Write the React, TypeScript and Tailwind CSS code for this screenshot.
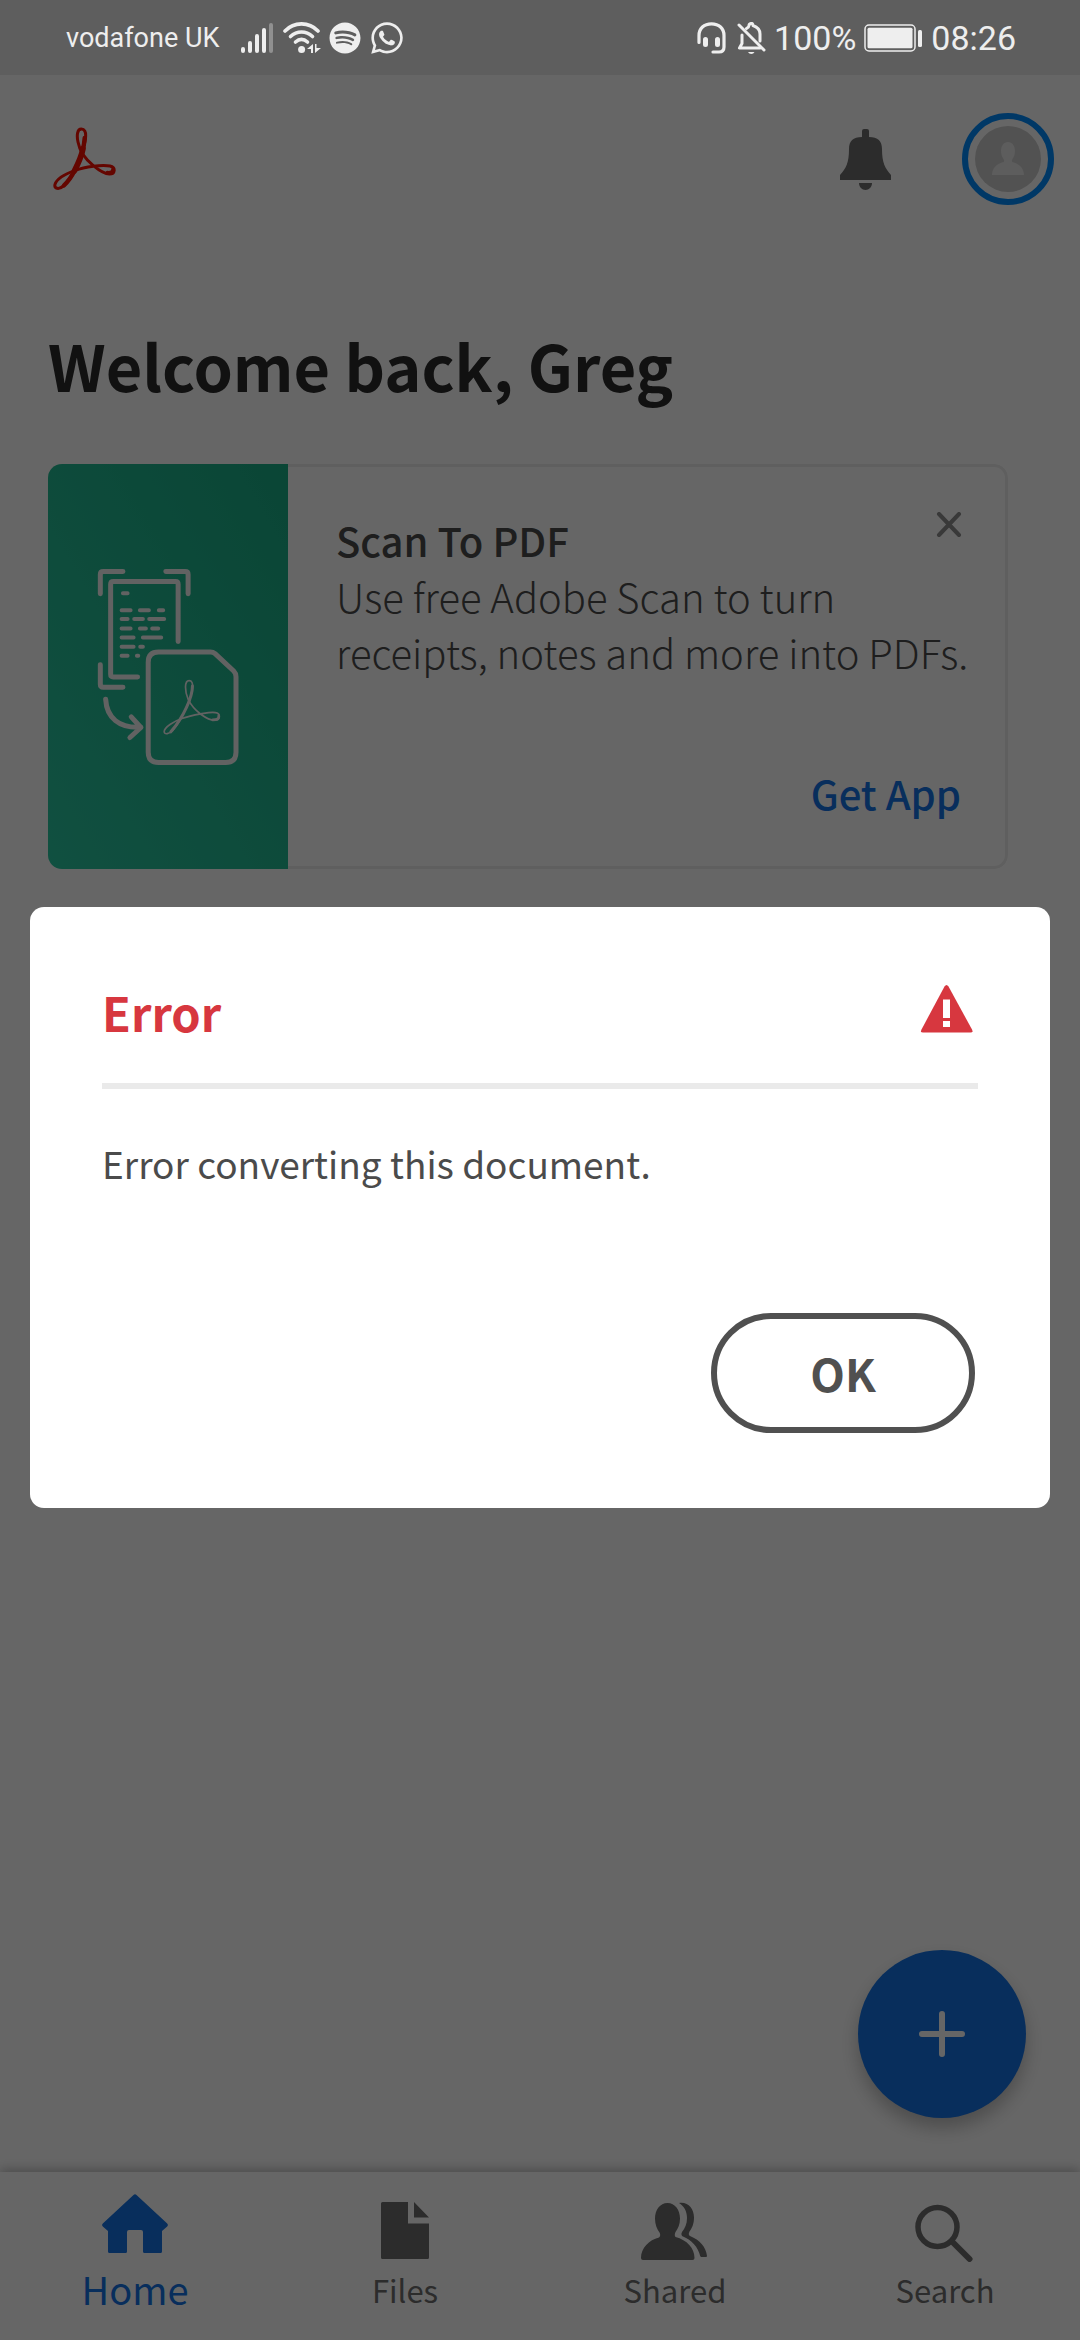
import type { ReactNode } from "react";
import { FaSpotify, FaWhatsapp } from "react-icons/fa";

function StatusBar() {
  return (
    <header className="flex h-[75px] shrink-0 items-center justify-between bg-[#5e5e5e] pr-16 pl-[66px] font-['Roboto',sans-serif] text-[#eeeeee]">
      <div className="flex items-center">
        <span className="mr-[22px] text-[27px] leading-8">vodafone UK</span>
        <svg className="mr-2 h-8 w-[34px]" viewBox="0 0 34 32" fill="none" stroke="currentColor" strokeWidth="4" strokeLinecap="round" aria-hidden="true">
          <path d="M2 27v2M9 21v8M16 14v15M23 8v21" />
          <path d="M30 3v26" opacity=".35" />
        </svg>
        <svg className="mr-2 h-8 w-[38px]" viewBox="0 0 38 32" fill="none" stroke="currentColor" strokeWidth="3.6" strokeLinecap="round" aria-hidden="true">
          <path d="M2 9c9-9.500 24-9.500 33 0" />
          <path d="M7.500 14.500c6.500-6 15.500-6 22 0" />
          <path d="M12.500 20c4-3.600 8-3.600 12 0" />
          <circle cx="18.600" cy="27.500" r="3.500" fill="currentColor" stroke="none" />
          <path d="M30 22v9h-2v-4h-4zM32 31v-9h1.500v4h4.500z" fill="currentColor" stroke="none" />
        </svg>
        <FaSpotify className="mr-2 size-8" aria-label="Spotify" />
        <FaWhatsapp className="size-9" aria-label="WhatsApp" />
      </div>
      <div className="flex items-center text-[34px] leading-10">
        <svg className="mr-[10px] h-8 w-[30px]" viewBox="0 0 30 32" fill="none" stroke="currentColor" strokeWidth="3.200" strokeLinecap="round" aria-hidden="true">
          <path d="M2 20.500V13.500C2 6.500 7 1.800 14.500 1.800S27 6.500 27 13.500V25q0 5-5 5h-6" />
          <path d="M8.500 17.500v5M20.500 17.500v5" strokeWidth="5" />
        </svg>
        <svg className="mr-2 h-8 w-[29px]" viewBox="0 0 29 32" fill="none" stroke="currentColor" strokeWidth="3" strokeLinecap="round" strokeLinejoin="round" aria-hidden="true">
          <path d="M2 3l25 25" />
          <path d="M5 13v8.500L2.500 26H23M9.500 6.500Q12 5 12 3.500t2-2 2 2Q23 6 23 12v7" />
          <path d="M11 30h6.500q-1 2-3.200 2T11 30z" fill="currentColor" stroke="none" />
        </svg>
        <span>100%</span>
        <svg className="mx-2 h-[30px] w-[59px]" viewBox="0 0 59 30" fill="none" aria-label="Battery full" role="img">
          <rect x="1" y="2" width="50" height="26" rx="4" stroke="currentColor" strokeWidth="1.500" />
          <rect x="3.500" y="4.700" width="45" height="20.600" rx="1.500" fill="currentColor" />
          <rect x="54" y="7" width="4" height="17" rx="1.500" fill="currentColor" />
        </svg>
        <span>08:26</span>
      </div>
    </header>
  );
}

function AcrobatMark() {
  return (
    <svg className="size-16 text-[#fa0f00]" viewBox="36 51 192 192" fill="none" stroke="currentColor" strokeLinecap="round" strokeLinejoin="round" role="img" aria-label="Adobe Acrobat">
      <path
        d="M124 57C111 57 110 78 114 96C118 118 132 144 160 167C178 182 194 192 208 192C226 192 228 172 210 168C196 165 178 166 160 169C140 172 124 175 106 181C80 190 50 206 45 223C42 236 56 240 70 228C86 214 98 194 106 178C116 158 124 136 129 118C137 92 144 57 124 57z"
        strokeWidth="9"
      />
      <path d="M129 116C125 136 114 162 103 183" strokeWidth="17" />
      <path d="M134 84C133 100 131 110 127 124M106 178C96 198 86 214 72 226" strokeWidth="13" />
      <path d="M202 188q16 2 17-10" strokeWidth="11" />
    </svg>
  );
}

function ScanArtwork() {
  return (
    <svg className="h-[198px] w-[143px] text-[#f4f6f5]" viewBox="200 354 430 594" fill="none" stroke="currentColor" strokeWidth="15" strokeLinecap="round" strokeLinejoin="round" aria-hidden="true">
      <path d="M210 431v-58q0-9 9-9h59M407 364h58q9 0 9 9v58M210 644v59q0 9 9 9h59" />
      <path d="M322 681h-73q-8 0-8-8V402q0-8 8-8h187q8 0 8 8v172" />
      <path d="M278 429h14M274 480h27M329 480h27M386 480h13M274 507h18M312 507h26M357 507h45M274 535h27M329 535h18M366 535h18M274 562h36M338 562h55M274 590h36M330 590h8M274 617h18M320 617h4" strokeWidth="12" />
      <path d="M226 748c3 55 40 88 106 84M303 801l29 32-33 30" />
      <path d="M354 637q0-31 31-31h156q8 0 14 5l56 52q7 7 7 17v227q0 31-31 31H385q-31 0-31-31z" />
      <path d="M477 692C462 692 464 725 474 748C484 768 498 782 512 793C530 806 545 812 556 811C572 809 572 790 556 788C540 786 525 790 512 792C490 796 475 799 455 806C430 815 403 832 402 845C402 856 418 852 428 842C445 822 465 785 477 752C488 725 494 692 477 692z" strokeWidth="5" />
      <path d="M487 708C487 740 462 800 422 846" strokeWidth="9" />
      <path d="M548 810q20 0 18-12" strokeWidth="8" />
    </svg>
  );
}

function ScanCard() {
  return (
    <section className="flex min-h-[405px] overflow-hidden rounded-[14px] bg-white">
      <div className="flex w-60 shrink-0 items-center justify-center bg-linear-to-bl from-[#1aae86] to-[#2ac8a2]">
        <ScanArtwork />
      </div>
      <div className="flex flex-1 flex-col rounded-r-[14px] border-y-3 border-r-3 border-[#ededed] py-[45px] pr-5 pl-12">
        <div className="flex items-start justify-between">
          <h2 className="text-[40px] leading-14 font-medium text-[#4b4b4b]">Scan To PDF</h2>
          <button type="button" aria-label="Dismiss" className="mr-5 size-8 text-[#8e8e8e]">
            <svg viewBox="0 0 32 32" fill="none" stroke="currentColor" strokeWidth="4" strokeLinecap="round">
              <path d="M6 2l20 21M26 2L6 23" />
            </svg>
          </button>
        </div>
        <p className="text-[40px] leading-14 font-light text-[#4b4b4b]">Use free Adobe Scan to turn receipts, notes and more into PDFs.</p>
        <a href="#get-app" className="mt-auto mr-6 self-end text-[40px] leading-14 font-medium text-[#1473e6]">
          Get App
        </a>
      </div>
    </section>
  );
}

function NavItem({ label, active = false, children }: { label: string; active?: boolean; children: ReactNode }) {
  return (
    <a
      href={`#${label.toLowerCase()}`}
      aria-current={active ? "page" : undefined}
      className={
        active
          ? "flex flex-col items-center gap-[3px] text-[38px] leading-12 text-[#1473e6]"
          : "flex flex-col items-center gap-1 text-[31px] leading-12 text-[#6e6e6e]"
      }
    >
      <svg className="size-18" viewBox="0 0 72 72" fill="currentColor" aria-hidden="true">
        {children}
      </svg>
      {label}
    </a>
  );
}

function BottomNav() {
  return (
    <nav className="grid grid-cols-4 bg-white pt-[18px] pb-[26px] shadow-[0_-3px_10px_rgba(0,0,0,0.25)]">
      <NavItem label="Home" active>
        <path d="M34.500 5q1.500-1.500 3 0L68.200 33.500q1.600 1.500 0 3L63 41v20.500q0 1.500-1.500 1.500h-16q-1.500 0-1.500-1.500V42q0-2-2-2H30q-2 0-2 2v19.500q0 1.500-1.500 1.500h-16Q9 63 9 61.500V41l-5.200-4.500q-1.600-1.500 0-3z" />
      </NavItem>
      <NavItem label="Files">
        <path d="M13.500 12H39v21.500h21V67.500q0 1.500-1.500 1.500h-45Q12 69 12 67.500v-54Q12 12 13.500 12zM45 12l15 15.500H45z" />
      </NavItem>
      <NavItem label="Shared">
        <path d="M28.500 13C36 13 41 20 41 28.500c0 6-2 10-4.500 13.500-1 2-1 4 0 5C48 50 55.500 58 55.500 68q0 2-2 2H4q-2 0-2-2C2 58 10 50 20 47.500c1.500-1 1.500-3.500.500-5C18 39 16 34.500 16 28.500 16 20 21 13 28.500 13z" />
        <path d="M40 13c9-1.500 15 5.500 15 14.500 0 6.500-2 10.500-4.500 14-1 2-1 3.500.500 4.500C61 50 67 57 68 66q0 1-1 1h-4.500q-1 0-1.300-1C59 57 53 50 43 46q-1.500-1.500 0-4c3-4 5-8 5-14 0-7-3-12-8-15z" />
      </NavItem>
      <NavItem label="Search">
        <g fill="none" stroke="currentColor">
          <circle cx="28.500" cy="37" r="19.500" strokeWidth="5.500" />
          <path d="M43 51.500L60.500 69" strokeWidth="6" strokeLinecap="round" />
        </g>
      </NavItem>
    </nav>
  );
}

function ErrorDialog() {
  return (
    <div className="absolute inset-0 flex items-center justify-center bg-black/60 px-[30px]">
      <div role="alertdialog" aria-modal="true" aria-labelledby="dialog-title" aria-describedby="dialog-text" className="w-full rounded-[14px] bg-white px-18 pt-[69px] pb-[75px]">
        <div className="flex items-center justify-between border-b-6 border-[#eaeaea] pb-[35px]">
          <h2 id="dialog-title" className="text-[47px] leading-18 font-bold text-[#d7373f]">
            Error
          </h2>
          <svg className="size-15" viewBox="0 0 60 60" aria-hidden="true">
            <path d="M26.500 4.500q2-3 4 0L54 47.500q1.500 3-1.500 3H5q-3 0-1.500-3z" fill="#d7373f" />
            <path d="M25 17.500h7V36h-7zM25 39h7v6h-7z" fill="#fff" />
          </svg>
        </div>
        <p id="dialog-text" className="pt-[46px] text-[37px] leading-14 text-[#4b4b4b]">
          Error converting this document.
        </p>
        <div className="mt-[122px] mr-[3px] flex justify-end">
          <button type="button" className="h-30 w-66 rounded-full border-6 border-[#505050] text-[45px] leading-14 font-bold text-[#505050]">
            OK
          </button>
        </div>
      </div>
    </div>
  );
}

export default function App() {
  return (
    <div className="flex min-h-screen flex-col bg-white font-['Noto_Sans_CJK_SC','Noto_Sans',sans-serif]">
      <StatusBar />
      <div className="relative flex flex-1 flex-col">
        <div className="flex h-42 items-center pr-[26px] pl-13">
          <AcrobatMark />
          <button type="button" aria-label="Notifications" className="mr-[71px] ml-auto text-[#6e6e6e]">
            <svg className="h-[61px] w-[51px]" viewBox="0 0 51 61" fill="currentColor">
              <path d="M22 2q0-2 2-2h3q2 0 2 2v6C38 8 42 12 42 20c0 14 3 19 9 26v5H0v-5c6-7 9-12 9-26C9 12 13 8 22 8zM19 54h13c0 4-3 7-6.500 7S19 58 19 54z" />
            </svg>
          </button>
          <button type="button" aria-label="Account" className="flex size-[92px] items-center justify-center rounded-full border-6 border-[#008cff]">
            <svg className="size-[66px]" viewBox="0 0 66 66">
              <circle cx="33" cy="33" r="33" fill="#cdcdcd" />
              <path d="M33 16c4.500 0 7 4 7 9 0 3-1 6-2.500 8-.8 1.500-.8 2.500 0 3C44 37.500 49 42 49 49H17c0-7 5-11.500 11.500-13 .8-.500.800-1.500 0-3C27 31 26 28 26 25c0-5 2.500-9 7-9z" fill="#e8e8e8" />
            </svg>
          </button>
        </div>
        <main className="relative flex flex-1 flex-col px-12 pt-[82px]">
          <h1 className="mb-[59px] text-[63px] leading-20 font-bold text-[#2c2c2c]">Welcome back, Greg</h1>
          <div className="mr-6">
            <ScanCard />
          </div>
          <button type="button" aria-label="Create" className="absolute right-[54px] bottom-[54px] flex size-42 items-center justify-center rounded-full bg-[#1473e6] text-white shadow-[0_10px_18px_rgba(0,0,0,0.25)]">
            <svg className="size-12" viewBox="0 0 48 48" fill="none" stroke="currentColor" strokeWidth="6" strokeLinecap="round">
              <path d="M24 4v40M4 24h40" />
            </svg>
          </button>
        </main>
        <BottomNav />
        <ErrorDialog />
      </div>
    </div>
  );
}
